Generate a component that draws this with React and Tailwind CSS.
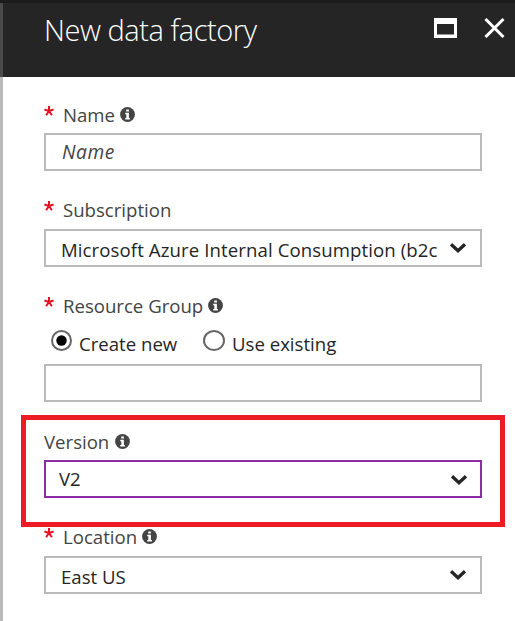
import React from "react";

function Info({ className = "" }) {
  return (
    <svg className={`h-[15px] w-[15px] shrink-0 ${className}`} viewBox="0 0 15 15">
      <circle cx="7.5" cy="7.5" r="7.4" fill="#444" />
      <path d="M6.2 2.4h2.7v2.2H6.2zM5.2 5.8h3.7v5.2h1v1.4H5.2V11h1.1V7.2H5.2z" fill="#fff" />
    </svg>
  );
}

function Chevron({ className = "" }) {
  return (
    <svg className={`h-[12px] w-[18px] shrink-0 ${className}`} viewBox="0 0 18 12">
      <path d="M2 2.2 9 8.8 16 2.2" fill="none" stroke="#252525" strokeWidth="3.3" />
    </svg>
  );
}

function Star() {
  return (
    <svg className="mt-[5px] h-[10px] w-[10px] shrink-0" viewBox="0 0 10 10">
      <path d="M5 5V0M5 5 .4 3.5M5 5l4.6-1.5M5 5 2.1 9.2M5 5l2.9 4.2" fill="none" stroke="#e81123" strokeWidth="2" />
    </svg>
  );
}

function Label({ required, text, textClass = "", info }) {
  return (
    <div className="flex h-[28px] items-start">
      {required && <Star />}
      <span className={`text-[18.6px] leading-[28px] whitespace-nowrap text-[#444] ${required ? "ml-[9px]" : ""} ${textClass}`}>{text}</span>
      {info && <Info className="mt-[6px]" />}
    </div>
  );
}

function Field({ children, className = "" }) {
  return (
    <div className={`flex h-[38px] w-[438px] items-center border-2 bg-white text-[18.6px] text-[#252525] ${className}`}>
      {children}
    </div>
  );
}

export default function App() {
  return (
    <div className="relative flex h-[621px] w-[515px] flex-col overflow-hidden bg-white font-['Open_Sans','Noto_Sans',sans-serif]">
      <div className="h-[3px] shrink-0 bg-[#1b1b1b]" />
      <header className="flex h-[74px] shrink-0 border-l-[3px] border-[#4a4a4a] bg-[#252525]">
        <h1 className="ml-[41px] mt-[7px] w-[389px] text-[29px] leading-[40px] font-light tracking-[-0.45px] text-white">New data factory</h1>
        <svg className="mt-[14px] h-[21px] w-[24px]" viewBox="0 0 24 21">
          <path d="M1 1h23v20H1zM4 7v10.5h17V7z" fill="#fff" fillRule="evenodd" />
        </svg>
        <svg className="ml-[27px] mt-[14px] h-[21px] w-[21px]" viewBox="0 0 21 21">
          <path d="m1.5 2 18 18m0-18-18 18" stroke="#fff" strokeWidth="3" />
        </svg>
      </header>
      <main className="flex flex-1 flex-col border-l-[3px] border-[#bababa] pl-[41px] pt-[24px]">
        <Label required text="Name" textClass="w-[57px]" info />
        <Field className="mt-[4px] border-[#bababa] pl-[16px]">
          <span className="text-[19.2px] text-[#444] italic tracking-[0.6px]">Name</span>
        </Field>
        <div className="mt-[25px]"><Label required text="Subscription" /></div>
        <Field className="mt-[5px] border-[#bababa] pl-[15px]">
          <span className="w-[388px] whitespace-nowrap pt-[4px] tracking-[0.1px]">Microsoft Azure Internal Consumption (b2c</span>
          <Chevron />
        </Field>
        <div className="mt-[25px]"><Label required text="Resource Group" textClass="w-[145px]" info /></div>
        <div className="flex h-[28px] items-start text-[18.6px] leading-[28px] text-[#252525]">
          <svg className="ml-[6px] mt-[10px] h-[23px] w-[23px] shrink-0" viewBox="0 0 23 23">
            <circle cx="11.5" cy="10.5" r="9.5" fill="#fff" stroke="#666" strokeWidth="2" />
            <circle cx="11.5" cy="10.5" r="5.2" fill="#000" />
          </svg>
          <span className="ml-[6px] mt-[10px] w-[123px] whitespace-nowrap">Create new</span>
          <svg className="mt-[10px] h-[23px] w-[24px] shrink-0" viewBox="0 0 24 23">
            <ellipse cx="12" cy="10.5" rx="10" ry="9.5" fill="#fff" stroke="#666" strokeWidth="2" />
          </svg>
          <span className="ml-[6px] mt-[10px] whitespace-nowrap">Use existing</span>
        </div>
        <Field className="mt-[16px] border-[#bababa]" />
        <div className="mt-[26px]"><Label text="Version" textClass="w-[71px]" info /></div>
        <Field className="mt-[4px] border-[#8a2da5] pl-[13px]">
          <span className="w-[391px]">V2</span>
          <Chevron className="mt-[2px]" />
        </Field>
        <div className="mt-[25px]"><Label required text="Location" textClass="w-[79px]" info /></div>
        <Field className="mt-[5px] border-[#bababa] pl-[15px]">
          <span className="w-[388px] pt-[4px]">East US</span>
          <Chevron />
        </Field>
      </main>
      <div className="pointer-events-none absolute left-[21px] top-[415px] h-[112px] w-[484px] border-[5px] border-[#ed1c24]" />
    </div>
  );
}
